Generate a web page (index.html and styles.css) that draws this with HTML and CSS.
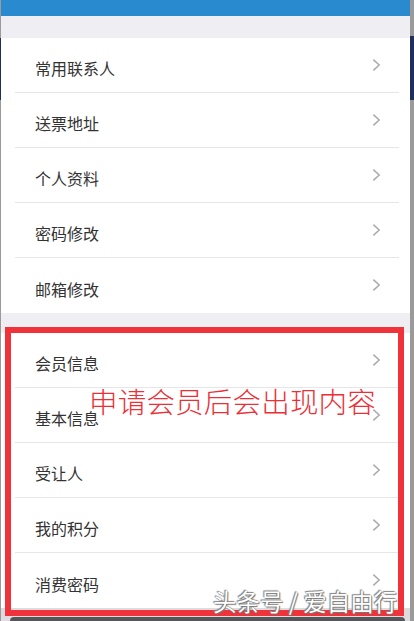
FILE: index.html
```html
<!DOCTYPE html>
<html lang="zh-CN">
<head>
<meta charset="utf-8">
<link rel="stylesheet" href="styles.css">
</head>
<body>
<div class="screen">
  <div class="page">
    <div class="topbar"></div>
    <div class="band"></div>
    <ul class="group">
      <li class="row"><span>常用联系人</span><svg class="chev" viewBox="0 0 10 14"><path d="M1.5 1 L8 7 L1.5 13"/></svg></li>
      <li class="row"><span>送票地址</span><svg class="chev" viewBox="0 0 10 14"><path d="M1.5 1 L8 7 L1.5 13"/></svg></li>
      <li class="row"><span>个人资料</span><svg class="chev" viewBox="0 0 10 14"><path d="M1.5 1 L8 7 L1.5 13"/></svg></li>
      <li class="row"><span>密码修改</span><svg class="chev" viewBox="0 0 10 14"><path d="M1.5 1 L8 7 L1.5 13"/></svg></li>
      <li class="row last"><span>邮箱修改</span><svg class="chev" viewBox="0 0 10 14"><path d="M1.5 1 L8 7 L1.5 13"/></svg></li>
    </ul>
    <div class="gap"></div>
    <ul class="group">
      <li class="row"><span>会员信息</span><svg class="chev" viewBox="0 0 10 14"><path d="M1.5 1 L8 7 L1.5 13"/></svg></li>
      <li class="row"><span>基本信息</span><svg class="chev" viewBox="0 0 10 14"><path d="M1.5 1 L8 7 L1.5 13"/></svg></li>
      <li class="row"><span>受让人</span><svg class="chev" viewBox="0 0 10 14"><path d="M1.5 1 L8 7 L1.5 13"/></svg></li>
      <li class="row"><span>我的积分</span><svg class="chev" viewBox="0 0 10 14"><path d="M1.5 1 L8 7 L1.5 13"/></svg></li>
      <li class="row last"><span>消费密码</span><svg class="chev" viewBox="0 0 10 14"><path d="M1.5 1 L8 7 L1.5 13"/></svg></li>
    </ul>
    <div class="footer-space"></div>
    <div class="bottombar"></div>
  </div>
  <div class="navy-left"></div>
  <div class="navy-right"></div>
  <div class="redbox"></div>
  <div class="note">申请会员后会出现内容</div>
  <div class="watermark">头条号 / 爱自由行</div>
</div>
</body>
</html>
```
FILE: styles.css
```css
html, body {
  margin: 0;
  padding: 0;
  background: #9a9a9a;
}
body {
  font-family: "Noto Sans CJK SC", "Noto Sans", sans-serif;
}
.screen {
  position: relative;
  width: 414px;
  height: 621px;
  overflow: hidden;
  background: #9a9a9a;
}
.page {
  margin-left: 1px;
  width: 409px;
  height: 621px;
  background: #dedee2;
  display: flex;
  flex-direction: column;
}
.topbar {
  height: 16px;
  background: #2a8ad0;
  flex: none;
}
.band {
  height: 22px;
  background: #efeff3;
  flex: none;
}
.gap {
  height: 20px;
  background: #efeff3;
  flex: none;
}
.group {
  list-style: none;
  margin: 0;
  padding: 0;
  background: #fff;
  flex: none;
}
.row {
  height: 55px;
  box-sizing: border-box;
  margin-left: 14px;
  margin-right: 11px;
  padding: 6px 18px 0 20px;
  border-bottom: 1px solid #e6e6e8;
  display: flex;
  align-items: center;
  justify-content: space-between;
  font-size: 16px;
  color: #333;
}
.row.last {
  border-bottom: none;
}
.chev {
  width: 9px;
  height: 14px;
  margin-top: -7px;
  fill: none;
  stroke: #a9a9ad;
  stroke-width: 1.6;
}
.footer-space {
  flex: 1;
  background: #dcdcdc;
}
.bottombar {
  height: 4px;
  margin: 0 5px 0 9px;
  background: #56565a;
  border-radius: 4px 4px 0 0;
  flex: none;
}
.navy-left {
  position: absolute;
  left: 0;
  top: 38px;
  width: 1px;
  height: 62px;
  background: #1d2f5a;
}
.navy-right {
  position: absolute;
  right: 0;
  top: 36px;
  width: 4px;
  height: 64px;
  background: #1d2f5a;
}
.redbox {
  position: absolute;
  left: 5px;
  top: 327px;
  width: 399px;
  height: 289px;
  box-sizing: border-box;
  border: 6px solid #f0323a;
}
.note {
  position: absolute;
  left: 89px;
  top: 381px;
  font-size: 28.5px;
  font-weight: 200;
  color: #ec2f37;
  line-height: 40px;
  letter-spacing: 0.2px;
  white-space: nowrap;
}
.watermark {
  position: absolute;
  left: 213px;
  top: 585px;
  font-size: 23.5px;
  line-height: 32px;
  color: #fff;
  white-space: nowrap;
  text-shadow: 0 0 1px #666, 1px 1px 1px #777, -1px -1px 1px #888;
}
```
